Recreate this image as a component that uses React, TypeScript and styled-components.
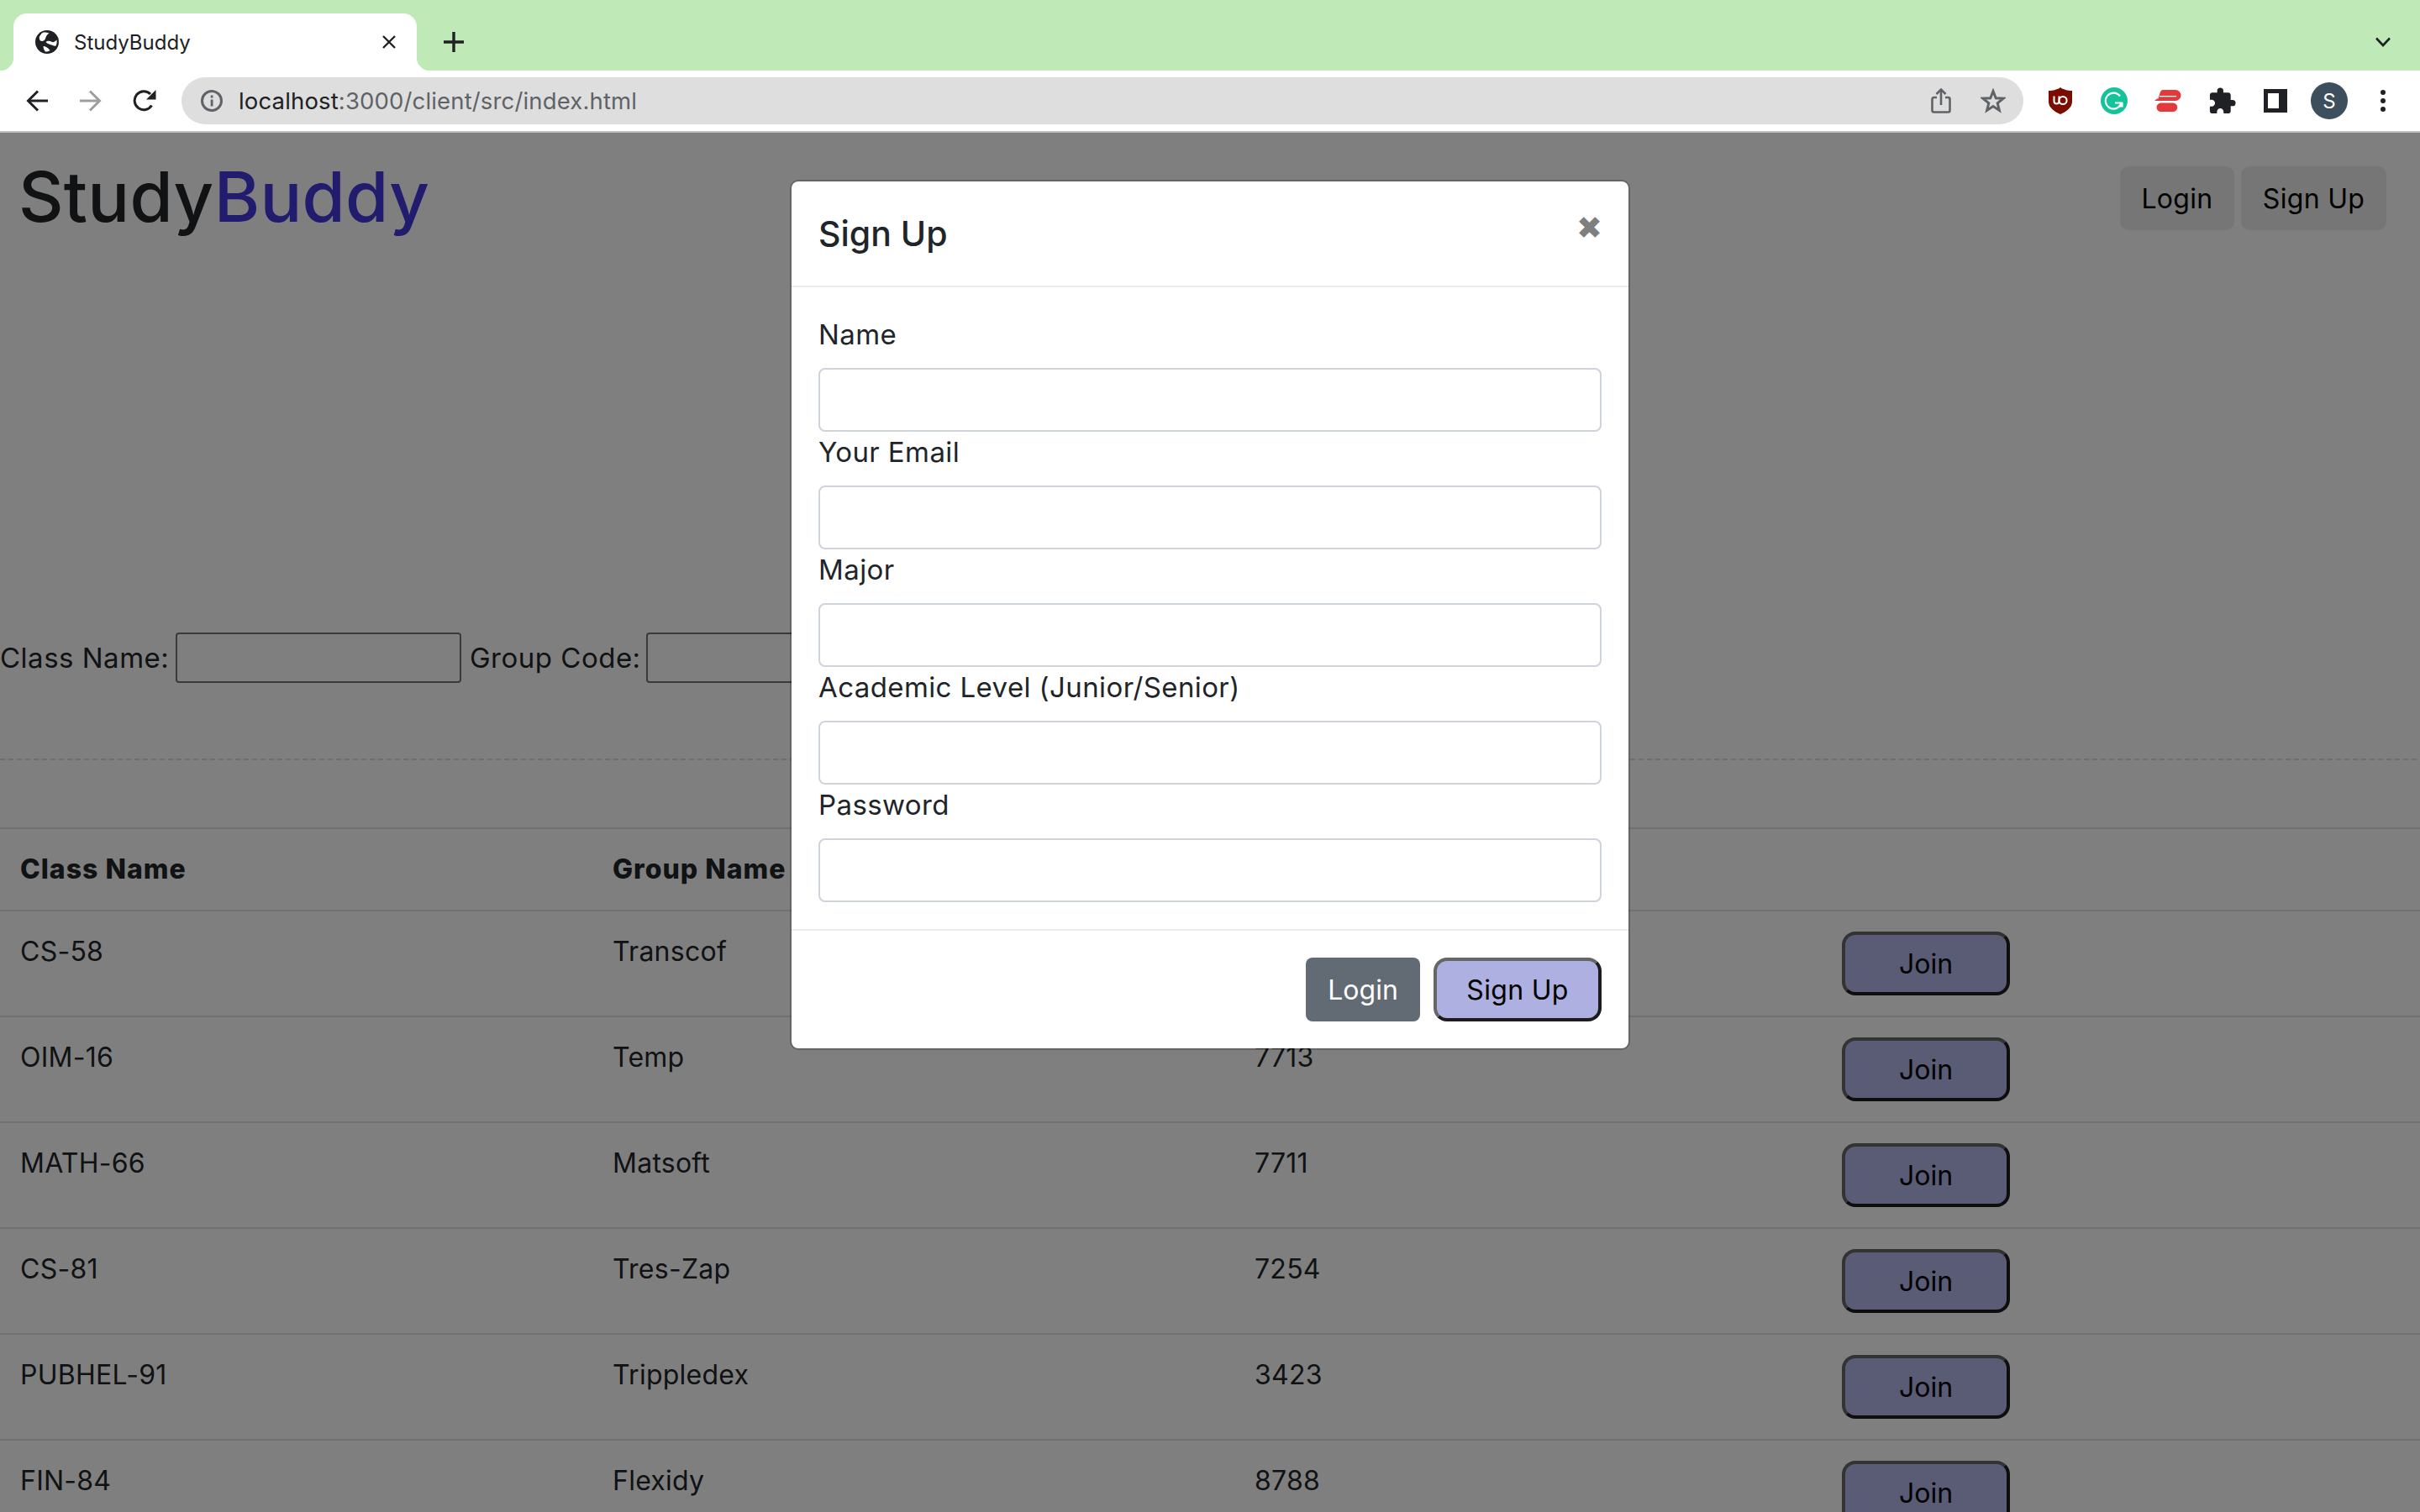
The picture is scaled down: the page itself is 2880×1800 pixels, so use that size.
import styled, { createGlobalStyle } from 'styled-components';
import { MdExtension } from 'react-icons/md';

interface ClassRow {
  className: string;
  groupName: string;
  code: string;
}

const rows: ClassRow[] = [
  { className: 'CS-58', groupName: 'Transcof', code: '' },
  { className: 'OIM-16', groupName: 'Temp', code: '7713' },
  { className: 'MATH-66', groupName: 'Matsoft', code: '7711' },
  { className: 'CS-81', groupName: 'Tres-Zap', code: '7254' },
  { className: 'PUBHEL-91', groupName: 'Trippledex', code: '3423' },
  { className: 'FIN-84', groupName: 'Flexidy', code: '8788' },
];

const modalFields = ['Name', 'Your Email', 'Major', 'Academic Level (Junior/Senior)', 'Password'];

const GlobalStyle = createGlobalStyle`
  html, body {
    margin: 0;
    padding: 0;
    width: 2880px;
    height: 1800px;
    overflow: hidden;
    background: #fff;
  }
  * {
    box-sizing: border-box;
  }
  body {
    font-family: Inter, "Liberation Sans", sans-serif;
    color: #212529;
  }
`;

const TabStrip = styled.div`
  height: 84px;
  background: #bfeab8;
  display: flex;
  align-items: flex-end;
  padding-left: 16px;
`;

const Tab = styled.div`
  position: relative;
  width: 480px;
  height: 68px;
  background: #fff;
  border-radius: 16px 16px 0 0;
  display: flex;
  align-items: center;
  padding: 0 24px 0 26px;

  &::before,
  &::after {
    content: '';
    position: absolute;
    bottom: 0;
    width: 16px;
    height: 16px;
  }
  &::before {
    left: -16px;
    background: radial-gradient(circle at 0 0, #bfeab8 16px, #fff 16.5px);
  }
  &::after {
    right: -16px;
    background: radial-gradient(circle at 100% 0, #bfeab8 16px, #fff 16.5px);
  }
`;

const TabTitle = styled.span`
  margin-left: 18px;
  font-size: 24px;
  color: #202124;
  flex: 1;
`;

const NewTabIcon = styled.svg`
  margin-left: 32px;
  margin-bottom: 22px;
`;

const TabListIcon = styled.svg`
  margin-left: auto;
  margin-right: 35px;
  margin-bottom: 28px;
`;

const Toolbar = styled.div`
  height: 74px;
  background: #fff;
  border-bottom: 2px solid #c0c0c0;
  display: flex;
  align-items: center;
  padding: 0 12px;
`;

const IconSlot = styled.div`
  width: 64px;
  height: 64px;
  flex: none;
  display: flex;
  align-items: center;
  justify-content: center;
`;

const AddressBar = styled.div`
  flex: 1;
  height: 56px;
  margin: 0 12px;
  border-radius: 28px;
  background: #dedede;
  display: flex;
  align-items: center;
  padding: 0 21px 0 23px;
`;

const Url = styled.div`
  margin-left: 19px;
  flex: 1;
  font-size: 27.5px;
  letter-spacing: 0.15px;
  color: #5f6368;
`;

const UrlHost = styled.span`
  color: #202124;
`;

const Avatar = styled.div`
  width: 44px;
  height: 44px;
  border-radius: 50%;
  background: #3d4f5c;
  color: #fff;
  font-size: 24px;
  display: flex;
  align-items: center;
  justify-content: center;
`;

const Page = styled.div`
  position: relative;
  height: 1642px;
  overflow: hidden;
`;

const SiteHeader = styled.header`
  height: 116px;
  padding: 40px 40px 0 22px;
  display: flex;
  justify-content: space-between;
  align-items: flex-start;
`;

const Logo = styled.h1`
  margin: -12px 0 0;
  font-size: 83px;
  line-height: 96px;
  font-weight: 500;
  letter-spacing: 0.2px;
`;

const LogoAccent = styled.span`
  color: #4438dc;
`;

const NavButtons = styled.nav`
  display: flex;
  gap: 8px;
`;

const NavButton = styled.button<{ $width: number }>`
  width: ${(p) => p.$width}px;
  height: 76px;
  border: none;
  border-radius: 10px;
  background: #ededed;
  color: #000;
  font: 400 32px Inter, sans-serif;
  letter-spacing: 0.3px;
  padding: 0;
`;

const SearchRow = styled.form`
  margin-top: 479px;
  display: flex;
  align-items: center;
  font-size: 33px;
  letter-spacing: 0.5px;
`;

const SearchLabel = styled.label<{ $width: number }>`
  width: ${(p) => p.$width}px;
  white-space: nowrap;
  flex: none;
`;

const SearchInput = styled.input`
  width: 340px;
  height: 60px;
  margin: 0 10px 0 9px;
  border: 2px solid #767676;
  border-radius: 4px;
  background: #fff;
  flex: none;
`;

const DashedRule = styled.div`
  margin-top: 90px;
  height: 2px;
  background: repeating-linear-gradient(90deg, #dedede 0 6px, transparent 6px 10px);
`;

const ClassTable = styled.table`
  margin-top: 80px;
  width: 2880px;
  table-layout: fixed;
  border-collapse: separate;
  border-spacing: 0;
  font-size: 32px;
  letter-spacing: 0.25px;
`;

const Col = styled.col<{ $width: number }>`
  width: ${(p) => p.$width}px;
`;

const HeadCell = styled.th`
  padding: 24px;
  border-top: 2px solid #dee2e6;
  line-height: 48px;
  font-weight: 800;
  letter-spacing: 1px;
  text-align: left;
`;

const Cell = styled.td`
  padding: 24px;
  border-top: 2px solid #dee2e6;
  line-height: 48px;
  vertical-align: top;
`;

const JoinButton = styled.button`
  display: block;
  width: 200px;
  height: 76px;
  border: 4px solid;
  border-color: #666 #1c1c1c #1c1c1c #666;
  border-radius: 16px;
  background: #b4b6e8;
  color: #000;
  font: 400 32px Inter, sans-serif;
  padding: 0;
`;

const Backdrop = styled.div`
  position: absolute;
  inset: 0;
  background: rgba(0, 0, 0, 0.5);
`;

const Modal = styled.div`
  width: 1000px;
  margin: 56px auto 0;
  background: #fff;
  border: 2px solid rgba(0, 0, 0, 0.2);
  border-radius: 10px;
  background-clip: padding-box;
`;

const ModalHeader = styled.div`
  height: 126px;
  padding: 32px;
  border-bottom: 2px solid #e9ecef;
  display: flex;
  justify-content: space-between;
`;

const ModalTitle = styled.h5`
  margin: 0;
  font-size: 41px;
  line-height: 60px;
  font-weight: 500;
`;

const CloseIcon = styled.span`
  font-family: "DejaVu Sans", sans-serif;
  font-size: 37px;
  line-height: 37px;
  color: #7f7f7f;
  margin: 5px -1px 0 0;
`;

const ModalBody = styled.div`
  padding: 32px;
`;

const FieldLabel = styled.label`
  display: block;
  font-size: 33px;
  line-height: 48px;
  letter-spacing: 0.4px;
  margin-bottom: 16px;
`;

const FieldInput = styled.input`
  display: block;
  width: 100%;
  height: 76px;
  border: 2px solid #ced4da;
  border-radius: 8px;
  background: #fff;
`;

const ModalFooter = styled.div`
  padding: 32px;
  border-top: 2px solid #e9ecef;
  display: flex;
  justify-content: flex-end;
  gap: 16px;
`;

const SecondaryButton = styled.button`
  width: 136px;
  height: 76px;
  border: none;
  border-radius: 8px;
  background: #626a74;
  color: #fff;
  font: 400 32px Inter, sans-serif;
  padding: 0;
`;

const PrimaryButton = styled.button`
  width: 200px;
  height: 76px;
  border: 4px solid;
  border-color: #666 #1c1c1c #1c1c1c #666;
  border-radius: 16px;
  background: #adb0e0;
  color: #000;
  font: 400 32px Inter, sans-serif;
  letter-spacing: 0.3px;
  padding: 0;
`;

const GlobeIcon = () => (
  <svg width="28" height="28" viewBox="0 0 28 28" style={{ flex: 'none' }}>
    <circle cx="14" cy="14" r="14" fill="#202124" />
    <path d="M8.5 3C11 2.2 14 2.6 16.5 3.6C14 5 12.8 7.5 12 10C11 12.5 8.5 13.5 6 12.5C5 11 4.5 9.5 4.8 8C5.8 6 7 4.2 8.5 3Z" fill="#fff" />
    <path d="M12.5 14C14.5 12 17.5 12.5 19.5 13.8C21.5 15 24 13 25.5 11.5C26 14 25.5 16.5 24.5 18.5C22.5 19 21 18.5 19.5 17.5C17 16.5 14.5 16.5 12.5 14Z" fill="#fff" />
    <path d="M9.5 19C12 19 15 20.5 17.5 24C16 25 14 25.5 12 25.5C10.5 23.5 9.5 21.5 9.5 19Z" fill="#fff" />
  </svg>
);

const BackIcon = ({ color }: { color: string }) => (
  <svg width="26" height="26" viewBox="0 0 26 26" fill="none" stroke={color} strokeWidth="3">
    <path d="M26 13H3" />
    <path d="M14 1.5L2.5 13L14 24.5" />
  </svg>
);

const ForwardIcon = ({ color }: { color: string }) => (
  <svg width="26" height="26" viewBox="0 0 26 26" fill="none" stroke={color} strokeWidth="3">
    <path d="M0 13H23" />
    <path d="M12 1.5L23.5 13L12 24.5" />
  </svg>
);

const ReloadIcon = () => (
  <svg width="28" height="26" viewBox="0 0 28 26" fill="none">
    <path d="M22.5 18.5A11 11 0 1 1 21 5" stroke="#202124" strokeWidth="3" />
    <path d="M27.5 0V11.5H16Z" fill="#202124" />
  </svg>
);

const InfoIcon = () => (
  <svg width="26" height="26" viewBox="0 0 26 26" fill="none" style={{ flex: 'none' }}>
    <circle cx="13" cy="13" r="11.5" stroke="#5f6368" strokeWidth="3" />
    <rect x="11.7" y="11.5" width="2.8" height="8" fill="#5f6368" />
    <rect x="11.7" y="6.5" width="2.8" height="3" fill="#5f6368" />
  </svg>
);

const ShareIcon = () => (
  <svg width="24" height="30" viewBox="0 0 24 30" fill="none" stroke="#5f6368" strokeWidth="2.6" style={{ flex: 'none' }}>
    <path d="M7 11H3A2 2 0 0 0 1.5 13V26.5A2 2 0 0 0 3.5 28.5H20.5A2 2 0 0 0 22.5 26.5V13A2 2 0 0 0 20.5 11H17" />
    <path d="M12 20V2" />
    <path d="M6.5 7L12 1.5L17.5 7" />
  </svg>
);

const StarIcon = () => (
  <svg width="30" height="30" viewBox="0 0 30 30" fill="none" stroke="#5f6368" strokeWidth="3" style={{ flex: 'none', marginLeft: '35px' }}>
    <path d="M15 3.5L18.2 11.7L27 12.2L20.2 17.8L22.4 26.4L15 21.6L7.6 26.4L9.8 17.8L3 12.2L11.8 11.7Z" />
  </svg>
);

const UblockIcon = () => (
  <svg width="28" height="32" viewBox="0 0 28 32">
    <path d="M14 0C17 2.5 23 4 28 4V17C28 24 21 29 14 32C7 29 0 24 0 17V4C5 4 11 2.5 14 0Z" fill="#7b0d00" />
    <path d="M6.5 10.5V16.5C6.5 20.5 12.5 20.5 12.5 16.5V10.5" fill="none" stroke="#fff" strokeWidth="2" />
    <circle cx="17" cy="15.5" r="4.6" fill="none" stroke="#fff" strokeWidth="2" />
  </svg>
);

const GrammarlyIcon = () => (
  <svg width="32" height="32" viewBox="0 0 32 32" fill="none">
    <circle cx="16" cy="16" r="16" fill="#15c39a" />
    <path d="M23 10.5A9.5 9.5 0 1 0 24.5 18.5H17" stroke="#fff" strokeWidth="2.2" />
    <path d="M21 22.5H25.5V18" stroke="#fff" strokeWidth="2.2" />
  </svg>
);

const VpnIcon = () => (
  <svg width="32" height="26" viewBox="0 0 32 26">
    <path d="M9.5 0H25A6.5 6.5 0 0 1 25 13H0L3 10.5H4.5L6 5.5C6.5 3 7.5 0.5 9.5 0Z" fill="#e23a3a" />
    <path d="M6 7.6H26" stroke="#fff" strokeWidth="1.3" />
    <path d="M7.5 15.5H22A5.25 5.25 0 0 1 22 26H8A5.25 5.25 0 0 1 7.5 15.5Z" fill="#e23a3a" />
  </svg>
);

const SidePanelIcon = () => (
  <svg width="28" height="28" viewBox="0 0 28 28">
    <rect width="28" height="28" fill="#202124" />
    <rect x="5" y="5" width="13" height="18" fill="#fff" />
  </svg>
);

const MoreIcon = () => (
  <svg width="8" height="28" viewBox="0 0 8 28" fill="#202124">
    <circle cx="4" cy="4" r="3" />
    <circle cx="4" cy="14" r="3" />
    <circle cx="4" cy="24" r="3" />
  </svg>
);

const App = () => {
  return (
    <>
      <GlobalStyle />
      <TabStrip>
        <Tab>
          <GlobeIcon />
          <TabTitle>StudyBuddy</TabTitle>
          <svg width="18" height="18" viewBox="0 0 18 18" stroke="#202124" strokeWidth="2.4">
            <path d="M2 2L16 16M16 2L2 16" />
          </svg>
        </Tab>
        <NewTabIcon width="24" height="24" viewBox="0 0 24 24" stroke="#202124" strokeWidth="3.4">
          <path d="M12 0V24M0 12H24" />
        </NewTabIcon>
        <TabListIcon width="18" height="12" viewBox="0 0 18 12" fill="none" stroke="#202124" strokeWidth="2.6">
          <path d="M1 1.5L9 10L17 1.5" />
        </TabListIcon>
      </TabStrip>
      <Toolbar>
        <IconSlot><BackIcon color="#202124" /></IconSlot>
        <IconSlot><ForwardIcon color="#9e9e9e" /></IconSlot>
        <IconSlot><ReloadIcon /></IconSlot>
        <AddressBar>
          <InfoIcon />
          <Url><UrlHost>localhost</UrlHost>:3000/client/src/index.html</Url>
          <ShareIcon />
          <StarIcon />
        </AddressBar>
        <IconSlot><UblockIcon /></IconSlot>
        <IconSlot><GrammarlyIcon /></IconSlot>
        <IconSlot><VpnIcon /></IconSlot>
        <IconSlot><MdExtension size={35} color="#202124" /></IconSlot>
        <IconSlot><SidePanelIcon /></IconSlot>
        <IconSlot><Avatar>S</Avatar></IconSlot>
        <IconSlot><MoreIcon /></IconSlot>
      </Toolbar>
      <Page>
        <SiteHeader>
          <Logo>Study<LogoAccent>Buddy</LogoAccent></Logo>
          <NavButtons>
            <NavButton $width={136}>Login</NavButton>
            <NavButton $width={173}>Sign Up</NavButton>
          </NavButtons>
        </SiteHeader>
        <SearchRow>
          <SearchLabel $width={200}>Class Name:</SearchLabel>
          <SearchInput />
          <SearchLabel $width={201}>Group Code:</SearchLabel>
          <SearchInput />
        </SearchRow>
        <DashedRule />
        <ClassTable>
          <colgroup>
            <Col $width={705} />
            <Col $width={764} />
            <Col $width={699} />
            <Col $width={712} />
          </colgroup>
          <thead>
            <tr>
              <HeadCell>Class Name</HeadCell>
              <HeadCell>Group Name</HeadCell>
              <HeadCell>Group Code</HeadCell>
              <HeadCell />
            </tr>
          </thead>
          <tbody>
            {rows.map((row) => (
              <tr key={row.className}>
                <Cell>{row.className}</Cell>
                <Cell>{row.groupName}</Cell>
                <Cell>{row.code}</Cell>
                <Cell><JoinButton>Join</JoinButton></Cell>
              </tr>
            ))}
          </tbody>
        </ClassTable>
        <Backdrop>
          <Modal>
            <ModalHeader>
              <ModalTitle>Sign Up</ModalTitle>
              <CloseIcon>✖</CloseIcon>
            </ModalHeader>
            <ModalBody>
              {modalFields.map((field) => (
                <div key={field}>
                  <FieldLabel>{field}</FieldLabel>
                  <FieldInput />
                </div>
              ))}
            </ModalBody>
            <ModalFooter>
              <SecondaryButton>Login</SecondaryButton>
              <PrimaryButton>Sign Up</PrimaryButton>
            </ModalFooter>
          </Modal>
        </Backdrop>
      </Page>
    </>
  );
};

export default App;
